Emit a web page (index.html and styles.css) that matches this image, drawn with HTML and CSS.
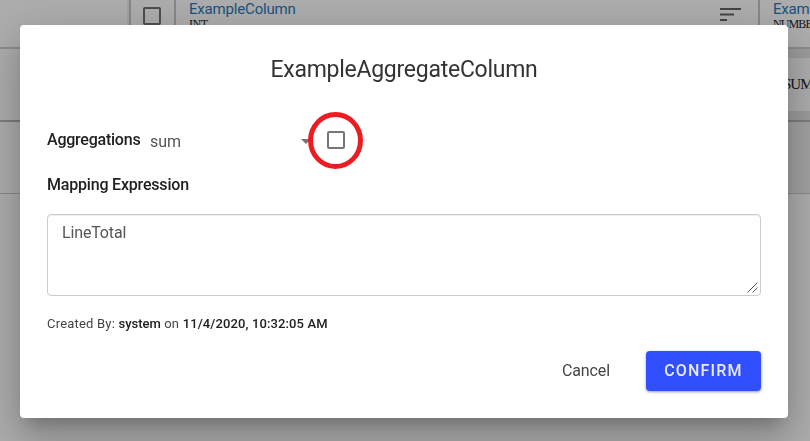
FILE: index.html
```html
<!DOCTYPE html>
<html lang="en">
<head>
<meta charset="utf-8">
<title>ExampleAggregateColumn</title>
<link rel="stylesheet" href="styles.css">
</head>
<body>
<div class="table">
  <div class="row head">
    <div class="cell lead"></div>
    <div class="cell check"><span class="box"></span></div>
    <div class="cell column">
      <div class="names"><a class="name">ExampleColumn</a><div class="type">INT</div></div>
      <svg class="sort" viewBox="0 0 21 14" width="21" height="14"><path d="M0 0h21v2H0zM0 5.500h14v2H0zM0 11h7v2H0z"/></svg>
    </div>
    <div class="cell last">
      <div class="names"><a class="name">Exam</a><div class="type">NUMBE</div></div>
    </div>
  </div>
  <div class="row values">
    <div class="side"></div>
    <div class="value-wrap"><div class="value">SUM</div></div>
  </div>
  <div class="row footer">
    <div class="side"></div>
    <div class="shade"></div>
  </div>
</div>
<div class="scrim"></div>
<div class="dialog">
  <h2 class="title">ExampleAggregateColumn</h2>
  <div class="aggregate">
    <span class="label">Aggregations</span>
    <div class="select"><span>sum</span><i class="arrow"></i></div>
    <div class="option"><span class="box"></span>
      <svg class="ring" viewBox="0 0 57 59" width="57" height="59"><ellipse cx="28.5" cy="29.5" rx="25" ry="26"/></svg>
    </div>
  </div>
  <div class="label mapping">Mapping Expression</div>
  <div class="editor">LineTotal
    <svg class="grip" viewBox="0 0 11 11" width="11" height="11"><path d="M.5 10.5l10-10M5.500 10.500l5-5"/></svg>
  </div>
  <div class="meta">Created By: <b>system</b> on <b class="date">11/4/2020, 10:32:05 AM</b></div>
  <div class="actions">
    <button class="cancel">Cancel</button>
    <button class="confirm">CONFIRM</button>
  </div>
</div>
</body>
</html>
```
FILE: styles.css
```css
* { box-sizing: border-box; }
body {
  margin: 0;
  height: 441px;
  overflow: hidden;
  background: #fff;
  font-family: Roboto, "Liberation Sans", sans-serif;
}
.table { width: 810px; overflow: hidden; }
.row { display: flex; }
.head { height: 49px; border-bottom: 2px solid #d0d0d0; }
.cell { display: flex; flex-shrink: 0; }
.lead { width: 131px; border-right: 2px solid #c8c8c8; box-shadow: inset -2px 0 #eee; }
.check { width: 45px; border-right: 2px solid #c8c8c8; padding: 7px 0 0 12px; }
.column { width: 584px; justify-content: space-between; border-right: 2px solid #c8c8c8; padding: 0 17px 0 13px; }
.last { width: 50px; padding-left: 13px; overflow: hidden; }
.box {
  display: block;
  width: 18px;
  height: 18px;
  border: 2px solid #757575;
  border-radius: 2px;
}
.name { display: block; height: 18px; font-size: 15px; line-height: 18px; letter-spacing: -.18px; color: #2b79b9; }
.type { font: 12px/13px "Liberation Serif", serif; color: #222; letter-spacing: -.4px; }
.last .type { letter-spacing: -.9px; }
.sort { margin-top: 8px; fill: #666; }
.side { width: 130px; flex-shrink: 0; }
.values { height: 73px; border-bottom: 2px solid #b8b8b8; }
.value-wrap { flex: 1; padding: 9px 0; background: #e6e6e6; }
.value { height: 53px; padding-left: 653px; background: #fff; font: 15px/53px "Liberation Serif", serif; color: #222; letter-spacing: -1px; }
.footer { height: 72px; border-bottom: 1px solid #ccc; }
.shade { flex: 1; background: #eee; }
.scrim { position: fixed; inset: 0; background: rgba(0, 0, 0, .32); }
.dialog {
  position: fixed;
  left: 20px;
  top: 25px;
  width: 768px;
  height: 393px;
  padding: 0 27px;
  border-radius: 4px;
  background: #fff;
  box-shadow: 0 11px 15px -7px rgba(0, 0, 0, .2), 0 24px 38px 3px rgba(0, 0, 0, .14), 0 9px 46px 8px rgba(0, 0, 0, .12);
}
.title { margin: 30px 0 0; height: 30px; font-size: 23px; line-height: 30px; letter-spacing: -.26px; font-weight: 400; text-align: center; color: #333; }
.aggregate { display: flex; align-items: center; height: 40px; margin-top: 35px; }
.label { font-size: 16px; line-height: 20px; font-weight: 500; letter-spacing: -.19px; color: #212121; }
.aggregate .label { width: 103px; letter-spacing: -.23px; }
.select { display: flex; align-items: center; justify-content: space-between; width: 161px; padding-top: 3px; font-size: 16px; line-height: 20px; color: #555; }
.arrow { border: 5px solid transparent; border-top-color: #757575; border-bottom: 0; }
.option { position: relative; margin-left: 16px; }
.ring { position: absolute; left: -20px; top: -20px; fill: none; stroke: #ed1c24; stroke-width: 5; }
.mapping { margin-top: 15px; }
.editor {
  position: relative;
  height: 82px;
  margin-top: 19px;
  padding: 8px 14px;
  border: 1px solid #ccc;
  border-radius: 4px;
  box-shadow: inset 0 1px 1px rgba(0, 0, 0, .075);
  font-size: 16px;
  line-height: 20px;
  letter-spacing: -.15px;
  color: #555;
}
.grip { position: absolute; right: 2px; bottom: 2px; fill: none; stroke: #555; stroke-width: 1; }
.meta { margin-top: 19px; height: 18px; font-size: 13px; line-height: 18px; color: #444; letter-spacing: .2px; }
.meta b { font-weight: 500; color: #212121; letter-spacing: 0; }
.meta .date { letter-spacing: .12px; }
.actions { display: flex; justify-content: flex-end; margin-top: 18px; }
button { height: 40px; padding: 0; border: 0; font: 16px/38px Roboto, sans-serif; }
.cancel { width: 82px; margin-right: 19px; background: none; color: #444; letter-spacing: -.1px; }
.confirm { width: 115px; border-radius: 4px; background: #304ffe; color: #e8eaff; font-weight: 500; letter-spacing: 1.2px; box-shadow: 0 1px 3px rgba(0, 0, 0, .4); }
```
